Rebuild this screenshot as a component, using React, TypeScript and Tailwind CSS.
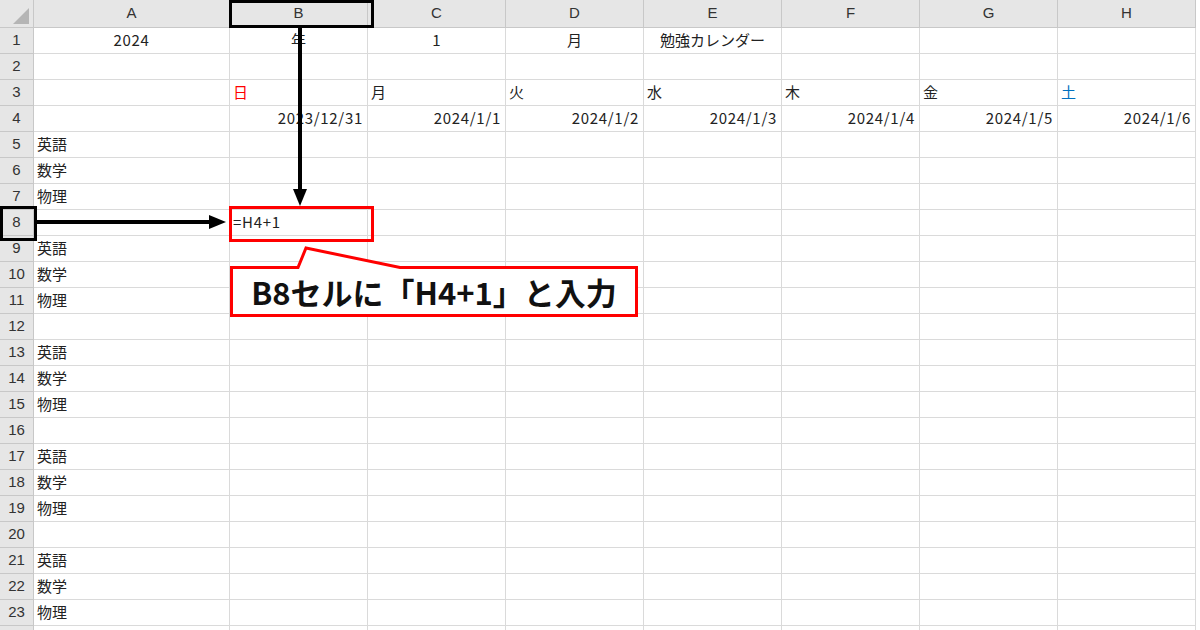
import React from "react";

type Cell = { text: string; align?: "left" | "center" | "right"; color?: string; wide?: boolean };

const COLS = ["A", "B", "C", "D", "E", "F", "G", "H"];
const SUBJECTS = ["英語", "数学", "物理", ""];

function buildRows(): Cell[][] {
  const rows: Cell[][] = [];
  for (let r = 1; r <= 24; r++) {
    const row: Cell[] = COLS.map(() => ({ text: "" }));
    if (r === 1) {
      row[0] = { text: "2024", align: "center", wide: true };
      row[1] = { text: "年", align: "center" };
      row[2] = { text: "1", align: "center" };
      row[3] = { text: "月", align: "center" };
      row[4] = { text: "勉強カレンダー", align: "center" };
    }
    if (r === 3) {
      const days = ["日", "月", "火", "水", "木", "金", "土"];
      days.forEach((d, i) => {
        row[i + 1] = {
          text: d,
          align: "left",
          color: d === "日" ? "text-[#ff0000]" : d === "土" ? "text-[#0070c0]" : "",
        };
      });
    }
    if (r === 4) {
      const dates = ["2023/12/31", "2024/1/1", "2024/1/2", "2024/1/3", "2024/1/4", "2024/1/5", "2024/1/6"];
      dates.forEach((d, i) => {
        row[i + 1] = { text: d, align: "right", wide: true };
      });
    }
    if (r >= 5 && r <= 23) {
      row[0] = { text: SUBJECTS[(r - 5) % 4], align: "left" };
    }
    if (r === 8) {
      row[1] = { text: "=H4+1", align: "left", wide: true };
    }
    rows.push(row);
  }
  return rows;
}

const alignClass = {
  left: "justify-start pl-[3px]",
  center: "justify-center",
  right: "justify-end pr-[4px]",
};

export default function App() {
  const rows = buildRows();
  return (
    <div className="relative h-[630px] w-[1200px] overflow-hidden bg-white font-['Noto_Sans_CJK_JP',sans-serif] text-[15px] text-[#222]">
      <div className="grid grid-cols-[34px_196px_repeat(7,138px)] grid-rows-[28px_repeat(24,26px)]">
        <div className="relative border-r border-b border-[#c8c8c8] bg-[#e6e6e6]">
          <svg className="absolute right-[4px] bottom-[3px]" width="16" height="16" viewBox="0 0 16 16">
            <polygon points="16,0 16,16 0,16" fill="#b5b5b5" />
          </svg>
        </div>
        {COLS.map(c => (
          <div
            key={c}
            className="flex items-center justify-center border-r border-b border-[#c8c8c8] bg-[#e6e6e6] font-['Liberation_Sans',sans-serif] text-[15px] text-[#333]"
          >
            {c}
          </div>
        ))}
        {rows.map((row, ri) => (
          <React.Fragment key={ri}>
            <div className="flex items-center justify-center border-r border-b border-[#c8c8c8] bg-[#e6e6e6] font-['Liberation_Sans',sans-serif] text-[15px] text-[#333]">
              {ri < 23 ? ri + 1 : ""}
            </div>
            {row.map((cell, ci) => (
              <div
                key={ci}
                className={`flex items-center overflow-visible whitespace-nowrap border-r border-b border-[#dadada] ${
                  alignClass[cell.align ?? "left"]
                } ${cell.color ?? ""} ${cell.wide ? "tracking-[0.7px]" : ""}`}
              >
                {cell.text}
              </div>
            ))}
          </React.Fragment>
        ))}
      </div>

      <svg className="pointer-events-none absolute inset-0" width="1200" height="630" viewBox="0 0 1200 630">
        <rect x="230.5" y="1.5" width="142" height="25" fill="none" stroke="#000" strokeWidth="3" />
        <rect x="1.5" y="207.5" width="34" height="32" fill="none" stroke="#000" strokeWidth="3" />
        <rect x="230.5" y="207.5" width="142" height="33" fill="none" stroke="#ff0000" strokeWidth="3" />
        <line x1="300" y1="28" x2="300" y2="192" stroke="#000" strokeWidth="4" />
        <polygon points="293,189 307,189 300,206" fill="#000" />
        <line x1="37" y1="222" x2="212" y2="222" stroke="#000" strokeWidth="4" />
        <polygon points="209,215 209,229 226,222" fill="#000" />
        <path
          d="M231.5 267.5 H298 L306 248 L400 267.5 H636.5 V315.5 H231.5 Z"
          fill="#fff"
          stroke="#ff0000"
          strokeWidth="3"
          strokeLinejoin="miter"
        />
      </svg>

      <div className="absolute left-[231px] top-[268px] flex h-[48px] w-[406px] items-center justify-center font-['Noto_Sans_CJK_JP',sans-serif] text-[31px] font-bold text-[#111]">
        B8セルに「H4+1」と入力
      </div>
    </div>
  );
}
